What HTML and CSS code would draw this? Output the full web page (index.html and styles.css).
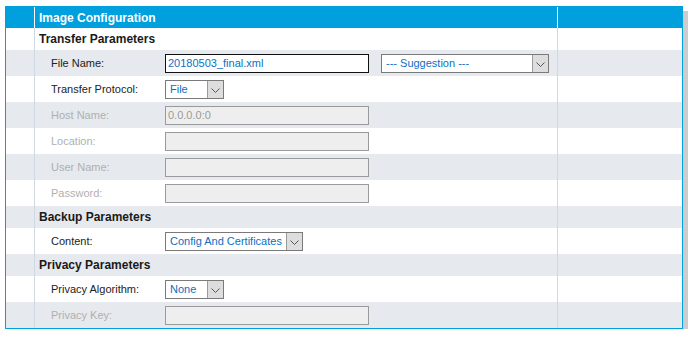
FILE: index.html
```html
<!DOCTYPE html>
<html lang="en">
<head>
  <meta charset="UTF-8" />
  <title>Image Configuration</title>
  <link rel="stylesheet" href="styles.css">
</head>
<body>
  <div class="panel">
    <div class="row head">
      <div class="gutter"></div>
      <div class="main">Image Configuration</div>
      <div class="extra"></div>
    </div>

    <div class="row section">
      <div class="gutter"></div>
      <div class="main">Transfer Parameters</div>
      <div class="extra"></div>
    </div>
    <div class="row field alt">
      <div class="gutter"></div>
      <div class="main">
        <span class="label">File Name:</span>
        <div class="input focus">20180503_final.xml</div>
        <div class="select wide">
          <span class="value">--- Suggestion ---</span>
          <span class="arrow"><svg width="9" height="5" viewBox="0 0 9 5"><polyline points="0.5,0.5 4.5,4.5 8.5,0.5" fill="none" stroke="#555" stroke-width="1"/></svg></span>
        </div>
      </div>
      <div class="extra"></div>
    </div>
    <div class="row field">
      <div class="gutter"></div>
      <div class="main">
        <span class="label">Transfer Protocol:</span>
        <div class="select small">
          <span class="value">File</span>
          <span class="arrow"><svg width="9" height="5" viewBox="0 0 9 5"><polyline points="0.5,0.5 4.5,4.5 8.5,0.5" fill="none" stroke="#555" stroke-width="1"/></svg></span>
        </div>
      </div>
      <div class="extra"></div>
    </div>
    <div class="row field alt">
      <div class="gutter"></div>
      <div class="main">
        <span class="label off">Host Name:</span>
        <div class="input disabled">0.0.0.0:0</div>
      </div>
      <div class="extra"></div>
    </div>
    <div class="row field">
      <div class="gutter"></div>
      <div class="main">
        <span class="label off">Location:</span>
        <div class="input disabled"></div>
      </div>
      <div class="extra"></div>
    </div>
    <div class="row field alt">
      <div class="gutter"></div>
      <div class="main">
        <span class="label off">User Name:</span>
        <div class="input disabled"></div>
      </div>
      <div class="extra"></div>
    </div>
    <div class="row field">
      <div class="gutter"></div>
      <div class="main">
        <span class="label off">Password:</span>
        <div class="input disabled"></div>
      </div>
      <div class="extra"></div>
    </div>

    <div class="row section alt">
      <div class="gutter"></div>
      <div class="main">Backup Parameters</div>
      <div class="extra"></div>
    </div>
    <div class="row field">
      <div class="gutter"></div>
      <div class="main">
        <span class="label">Content:</span>
        <div class="select">
          <span class="value">Config And Certificates</span>
          <span class="arrow"><svg width="9" height="5" viewBox="0 0 9 5"><polyline points="0.5,0.5 4.5,4.5 8.5,0.5" fill="none" stroke="#555" stroke-width="1"/></svg></span>
        </div>
      </div>
      <div class="extra"></div>
    </div>

    <div class="row section alt">
      <div class="gutter"></div>
      <div class="main">Privacy Parameters</div>
      <div class="extra"></div>
    </div>
    <div class="row field">
      <div class="gutter"></div>
      <div class="main">
        <span class="label">Privacy Algorithm:</span>
        <div class="select small">
          <span class="value">None</span>
          <span class="arrow"><svg width="9" height="5" viewBox="0 0 9 5"><polyline points="0.5,0.5 4.5,4.5 8.5,0.5" fill="none" stroke="#555" stroke-width="1"/></svg></span>
        </div>
      </div>
      <div class="extra"></div>
    </div>
    <div class="row field alt">
      <div class="gutter"></div>
      <div class="main">
        <span class="label off">Privacy Key:</span>
        <div class="input disabled"></div>
      </div>
      <div class="extra"></div>
    </div>
  </div>
</body>
</html>
```

FILE: styles.css
```css
* {
  box-sizing: border-box;
  margin: 0;
  padding: 0;
}

body {
  background: #fff;
  font-family: 'Liberation Sans', Arial, sans-serif;
  font-size: 11px;
  color: #222;
}

.panel {
  margin: 6px 0 0 5px;
  width: 678px;
  border: 1px solid #00a0de;
  box-shadow: 5px 5px 0 #cccccc;
  background: #fff;
}

.row {
  display: flex;
  align-items: stretch;
}

.row.alt {
  background: #e6e9ed;
}

.gutter {
  width: 29px;
  border-right: 1px solid #d0d9e2;
}

.main {
  width: 523px;
  border-right: 1px solid #d0d9e2;
  display: flex;
  align-items: center;
}

.extra {
  flex: 1;
}

.head {
  height: 21px;
  background: #00a0de;
  color: #fff;
  font-weight: bold;
  font-size: 12px;
}

.head .gutter,
.head .main {
  border-right-color: #fff;
}

.head .main,
.section .main {
  padding-left: 4px;
}

.section {
  height: 22px;
  font-weight: bold;
  font-size: 12px;
  color: #1a1a1a;
}

.field {
  height: 26px;
}

.field .main {
  padding-left: 16px;
}

.label {
  width: 114px;
  color: #222;
}

.label.off {
  color: #b0b0b0;
}

.input {
  width: 204px;
  height: 19px;
  border: 1px solid #999;
  padding: 0 2px;
  line-height: 17px;
  color: #0b6fc2;
  background: #fff;
}

.input.focus {
  border-color: #111;
}

.input.disabled {
  background: #eeeeee;
  border-color: #9a9a9a;
  color: #9a9a9a;
}

.select {
  display: flex;
  height: 19px;
  border: 1px solid #7a7a7a;
  background: #fff;
  color: #0b6fc2;
}

.select.wide {
  width: 168px;
  margin-left: 12px;
}

.select.small {
  width: 59px;
}

.select .value {
  flex: 1;
  padding: 0 4px 0 4px;
  line-height: 17px;
  white-space: nowrap;
}

.select .arrow {
  width: 16px;
  border-left: 1px solid #9a9a9a;
  background: #dddddd;
  display: flex;
  align-items: center;
  justify-content: center;
  padding-top: 2px;
}
```
